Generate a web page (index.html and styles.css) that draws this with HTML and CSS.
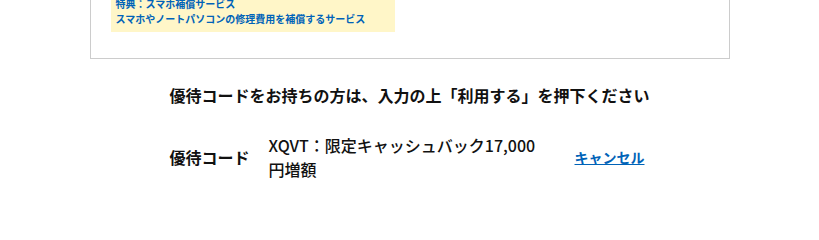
FILE: index.html
```html
<!DOCTYPE html>
<html lang="ja">
<head>
<meta charset="utf-8">
<link rel="stylesheet" href="styles.css">
</head>
<body>
<div class="page">
  <div class="box">
    <div class="perk">
      <div>特典：スマホ補償サービス</div>
      <div>スマホやノートパソコンの修理費用を補償するサービス</div>
    </div>
  </div>
  <p class="notice">優待コードをお持ちの方は、入力の上「利用する」を押下ください</p>
  <div class="row">
    <div class="label">優待コード</div>
    <div class="value">XQVT：限定キャッシュバック17,000円増額</div>
    <a class="cancel" href="#">キャンセル</a>
  </div>
</div>
</body>
</html>
```
FILE: styles.css
```css
html, body {
  margin: 0;
  padding: 0;
  background: #fff;
}
body {
  font-family: "Noto Sans CJK JP", "Noto Sans", sans-serif;
  color: #111;
}
.page {
  width: 640px;
  margin: 0 auto;
}
.box {
  box-sizing: border-box;
  width: 640px;
  margin-top: -10px;
  border: 1px solid #cccccc;
  border-top: none;
  padding: 0 0 26px 20px;
}
.perk {
  width: 274px;
  background: #fff6c8;
  padding: 6px 5px 6px 5px;
  color: #0063b8;
  font-size: 10px;
  font-weight: 700;
  line-height: 15px;
}
.notice {
  margin: 24px 0 0;
  text-align: center;
  font-size: 16px;
  font-weight: 700;
  line-height: 24px;
}
.row {
  display: flex;
  align-items: center;
  margin: 26px 0 0 80px;
}
.label {
  width: 99px;
  font-size: 16px;
  font-weight: 700;
  line-height: 24px;
}
.value {
  width: 272px;
  font-size: 16px;
  font-weight: 500;
  line-height: 24px;
}
.cancel {
  margin-left: 34px;
  color: #0063b8;
  font-size: 14px;
  font-weight: 700;
  text-decoration: underline;
}
```
